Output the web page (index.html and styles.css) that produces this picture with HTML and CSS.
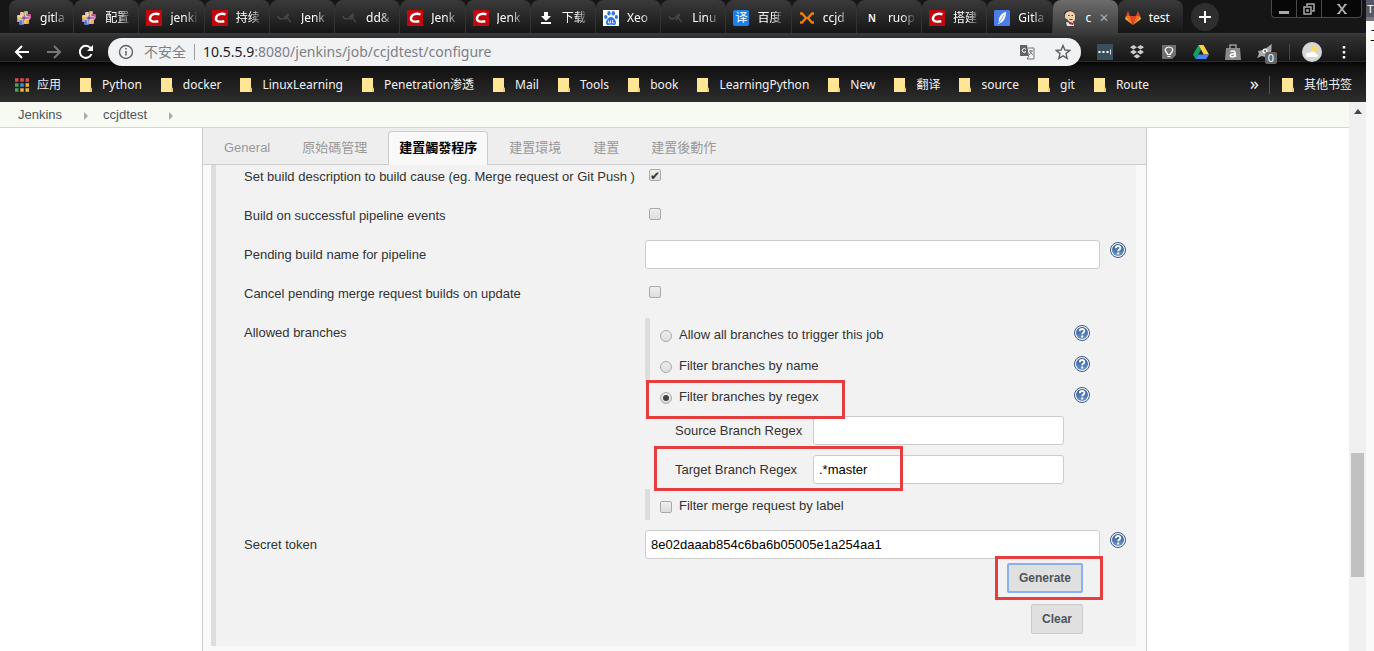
FILE: index.html
```html
<!DOCTYPE html>
<html lang="zh">
<head>
<meta charset="utf-8">
<title>ccjdtest Config [Jenkins]</title>
<link rel="stylesheet" href="styles.css">
</head>
<body>
<svg width="0" height="0" class="defs" aria-hidden="true">
  <defs>
    <linearGradient id="helpfill" x1="0" y1="0" x2="0" y2="1"><stop offset="0" stop-color="#2c5596"/><stop offset="1" stop-color="#6f96ca"/></linearGradient>
    <symbol id="i-hash" viewBox="0 0 16 16">
      <rect x="4" y="2" width="4" height="5" rx="1" fill="#e9b0a0"/><rect x="8" y="1" width="4" height="5" rx="1" fill="#9cc24d"/>
      <rect x="1" y="5" width="5" height="4" rx="1" fill="#f0c35a"/><rect x="10" y="4" width="5" height="5" rx="1" fill="#c9509e"/>
      <rect x="3" y="9" width="5" height="6" rx="1" fill="#5f74c8"/><rect x="8" y="9" width="5" height="5" rx="1" fill="#eab04a"/>
      <rect x="1" y="9" width="3" height="3" fill="#a78ad9"/><path d="M6 2l1 12M10 2l-1 12M2 6l12 1M2 10l12-1" stroke="#f2e4ee" stroke-width=".8"/>
      <rect x="6.500" y="6.500" width="3" height="3" fill="#7a4a8c"/>
    </symbol>
    <symbol id="i-csdn" viewBox="0 0 16 16"><path fill="#c2080f" d="M0 0h16v16H0z"/><path d="M13.500 4.300C10 3.200 4.800 3.600 4 8c-.6 3.800 4 4 8.300 3.300" fill="none" stroke="#fff" stroke-width="2.400"/></symbol>
    <symbol id="i-dim" viewBox="0 0 16 16"><path d="M1 6c1 4 5 4 8 0 2-3 3-2 2 0l-3 4M9 7c3 0 2 4 5 5" fill="none" stroke="#484848" stroke-width="1.300"/></symbol>
    <symbol id="i-down" viewBox="0 0 16 16"><path fill="#fff" d="M6 2h4v4h3l-5 5-5-5h3zM3 12h10v2H3z"/></symbol>
    <symbol id="i-paw" viewBox="0 0 16 16"><path fill="#fff" d="M0 0h16v16H0z"/><g fill="#2f76e8"><ellipse cx="2.800" cy="7" rx="1.700" ry="2.100"/><ellipse cx="6" cy="3.300" rx="1.700" ry="2.300"/><ellipse cx="10.300" cy="3.300" rx="1.700" ry="2.300"/><ellipse cx="13.400" cy="7" rx="1.600" ry="2.100"/><path d="M8 6.800c2 0 5.500 3.900 5 6.400-.6 2.600-3 1.500-5 1.500s-4.400 1.100-5-1.500C2.500 10.700 6 6.800 8 6.800z"/></g><path d="M5.500 10.500v2.500h2v-2.500M9.500 10V13H11.500" stroke="#fff" fill="none" stroke-width=".8"/></symbol>
    <symbol id="i-x" viewBox="0 0 16 16"><path d="M1 3.500h2L7 8l-4 4.500H1M15 3.500h-2L9 8l4 4.500h2" fill="none" stroke="#ec7c0c" stroke-width="2.400"/></symbol>
    <symbol id="i-feather" viewBox="0 0 16 16"><rect width="16" height="16" rx="1.500" fill="#4a7de8"/><path fill="#fff" d="M12 2C7 3 4 8 5 12l-1 2h1l1-1c4-1 6-6 6-11z"/><path d="M5 13l5-8" stroke="#4a7de8" stroke-width=".7"/></symbol>
    <symbol id="i-jenkins" viewBox="0 0 16 16"><path fill="#3a3030" d="M2 4c1-5 11-5 11 1l-1 5H4z"/><path fill="#f0cfaf" d="M3 5c1-5 9-5 10 0v4c-1 4-6 4-7 1L3 8z"/><path d="M6 5.500h1.500M9.500 5.500H11M7.500 9.500h3" stroke="#443" stroke-width="1"/><path fill="#e8e8e8" d="M4 12l4 1 3-1 1 4H5z"/><path fill="#c22" d="M7 12l4 1v2l-4-1z"/></symbol>
    <symbol id="i-gitlab" viewBox="0 0 16 16"><path fill="#e24329" d="M8 15L5 6h6z"/><path fill="#fc6d26" d="M8 15L5 6H1zM8 15l3-9h4z"/><path fill="#fca326" d="M1 6L0 9l8 6zM15 6l1 3-8 6z"/><path fill="#e24329" d="M1 6l2-5 2 5zM15 6l-2-5-2 5z"/></symbol>
    <symbol id="i-folder" viewBox="0 0 12 14"><path fill="#ffe694" d="M0 0h11v9l1 2v3H0z"/><path fill="#efc967" d="M10 9l2 3v2h-2z"/></symbol>
    <symbol id="i-help" viewBox="0 0 16 16"><circle cx="8" cy="8" r="7.500" fill="#fff" stroke="#2f5790"/><circle cx="8" cy="8" r="6" fill="url(#helpfill)"/><path d="M5.800 6.200c0-3 4.600-2.800 4.600-.3 0 1.700-2.200 1.700-2.200 3.400" fill="none" stroke="#fff" stroke-width="1.900"/><rect x="7.200" y="10.500" width="2" height="2" fill="#fff"/></symbol>
  </defs>
</svg>
<div class="browser">
  <header class="chrome">
    <div class="strip">
      <nav class="tabs" aria-label="Browser tabs">
        <button class="tab"><svg><use href="#i-hash"/></svg><span>gitla</span></button>
        <button class="tab"><svg><use href="#i-hash"/></svg><span>配置</span></button>
        <button class="tab"><svg><use href="#i-csdn"/></svg><span>jenki</span></button>
        <button class="tab"><svg><use href="#i-csdn"/></svg><span>持续</span></button>
        <button class="tab"><svg><use href="#i-dim"/></svg><span>Jenk</span></button>
        <button class="tab"><svg><use href="#i-dim"/></svg><span>dd&amp;</span></button>
        <button class="tab"><svg><use href="#i-csdn"/></svg><span>Jenk</span></button>
        <button class="tab"><svg><use href="#i-csdn"/></svg><span>Jenk</span></button>
        <button class="tab"><svg><use href="#i-down"/></svg><span>下载</span></button>
        <button class="tab"><svg><use href="#i-paw"/></svg><span>Xeo</span></button>
        <button class="tab"><svg><use href="#i-dim"/></svg><span>Linu</span></button>
        <button class="tab"><i class="fav fav-yi">译</i><span>百度</span></button>
        <button class="tab"><svg><use href="#i-x"/></svg><span>ccjd</span></button>
        <button class="tab"><i class="fav">N</i><span>ruop</span></button>
        <button class="tab"><svg><use href="#i-csdn"/></svg><span>搭建</span></button>
        <button class="tab"><svg><use href="#i-feather"/></svg><span>Gitla</span></button>
        <button class="tab current"><svg><use href="#i-jenkins"/></svg><span>c</span><b>✕</b></button>
        <button class="tab last"><svg><use href="#i-gitlab"/></svg><span>test</span></button>
      </nav>
      <button class="new-tab" aria-label="New tab"><svg viewBox="0 0 12 12"><path d="M6 0v12M0 6h12" stroke="#fff" stroke-width="2"/></svg></button>
      <div class="controls">
        <button aria-label="Minimize"><svg viewBox="0 0 12 12"><path d="M1 9.500h10" stroke="#aaa" stroke-width="3"/></svg></button>
        <button aria-label="Restore"><svg viewBox="0 0 12 12"><path d="M4 3V1h7v7H9M1 4h7v7H1zM4 7h1v1H4z" fill="none" stroke="#aaa" stroke-width="1.500"/></svg></button>
        <button class="close" aria-label="Close"><svg viewBox="0 0 12 12"><path d="M2.500 1.500l7 9M9.500 1.500l-7 9" stroke="#aaa" stroke-width="2"/><path d="M1 1.500h3M8 1.500h3M1 10.500h3M8 10.500h3" stroke="#aaa"/></svg></button>
      </div>
    </div>
    <div class="toolbar">
      <button class="nav" aria-label="Back"><svg viewBox="0 0 16 16"><path d="M15 8H2M8 2L2 8l6 6" fill="none" stroke="#fff" stroke-width="2"/></svg></button>
      <button class="nav" aria-label="Forward"><svg viewBox="0 0 16 16"><path d="M1 8h13M8 2l6 6-6 6" fill="none" stroke="#777" stroke-width="2"/></svg></button>
      <button class="nav" aria-label="Reload"><svg viewBox="0 0 16 16"><path d="M13.500 10A6 6 0 1 1 12.500 4" fill="none" stroke="#fff" stroke-width="2"/><path fill="#fff" d="M15 1v6H9z"/></svg></button>
      <div class="omnibox">
        <svg viewBox="0 0 16 16"><circle cx="8" cy="8" r="6.500" fill="none" stroke="#5f6368" stroke-width="1.400"/><path d="M8 7v4.500M8 4v1.600" stroke="#5f6368" stroke-width="1.500"/></svg>
        <span class="insecure">不安全</span>
        <span class="url"><b>10.5.5.9</b>:8080/jenkins/job/ccjdtest/configure</span>
        <svg viewBox="0 0 16 16"><path fill="#606468" d="M1 1h7l2 11H1z"/><path d="M9 4h6v11H8l2-3M10 7h4M12 6v1c0 2-1 3-2 4M11 8l3 3" fill="none" stroke="#777"/><path d="M7 5.500a2 2 0 1 0 0 2H5.500" fill="none" stroke="#fff"/></svg>
        <svg viewBox="0 0 16 16"><path d="M8 1.500l1.900 4.500 4.800.4-3.700 3.200 1.200 4.800L8 11.800l-4.200 2.600L5 9.600 1.300 6.400 6.100 6z" fill="none" stroke="#5f6368" stroke-width="1.400"/></svg>
      </div>
      <div class="extensions">
        <button aria-label="LastPass"><svg viewBox="0 0 16 16"><path fill="#39505c" d="M0 0h16v16H0z"/><path d="M1.500 8h2M5.500 8h2M9.500 8h2" stroke="#fff" stroke-width="2"/><path d="M13.500 5.500v5" stroke="#ddd"/></svg></button>
        <button aria-label="Dropbox"><svg viewBox="0 0 16 16"><path fill="#ccc" d="M4.500 1L8 3.300 4.500 5.600 1 3.300zM11.500 1L15 3.300l-3.500 2.300L8 3.300zM4.500 5.800L8 8.100l-3.500 2.300L1 8.100zM11.500 5.800L15 8.100l-3.500 2.300L8 8.100zM8 10l3.500 2.300L8 14.600l-3.500-2.300z"/></svg></button>
        <button aria-label="Notes"><svg viewBox="0 0 16 16"><path fill="#707070" d="M1 1h14v10l-4 4H1z"/><path d="M6.500 9.500c-4-3-2-6.500 1.500-6.500s5.500 3.500 1.500 6.500v1h-3zM6.500 12.500h3" fill="none" stroke="#fff" stroke-width="1.200"/></svg></button>
        <button aria-label="Drive"><svg viewBox="0 0 16 16"><path fill="#12a35f" d="M5.500 1L0 10.500l2.700 4.500L8 5.500z"/><path fill="#ffcf43" d="M5.500 1h5L16 10.500h-5.300z"/><path fill="#4285f4" d="M5.300 10.500H16L13.300 15H2.700z"/></svg></button>
        <button aria-label="Shopping"><svg viewBox="0 0 16 16"><path fill="#8a8a8a" d="M1 4h14l1 12H0z"/><path d="M5 5V1h6v4" fill="none" stroke="#999" stroke-width="1.500"/><path d="M5.500 7.500c5-1.500 5 1 5 5.500M10 9.800c-6-.3-6 3.500-2 3 2 0 2-2 2-3" fill="none" stroke="#fff" stroke-width="1.500"/></svg></button>
        <button class="counted" aria-label="Bird"><svg viewBox="0 0 16 16"><path fill="#aaa" d="M15 0c-1 3 0 5-1 8l-4 1-2 4-3-1-5 2 2-4-1-3 5-1c3-1 5-4 9-6z"/><circle cx="8" cy="7" r="2.500" fill="#fff"/><circle cx="8" cy="7" r="1.200" fill="#777"/></svg><i class="count">0</i></button>
      </div>
      <button class="avatar" aria-label="Profile"><svg viewBox="0 0 20 20"><circle cx="10" cy="10" r="10" fill="#d4d6d8"/><circle cx="12.500" cy="7.500" r="3.500" fill="#f8d869"/><path fill="#fff" d="M4 13c0-3 3-3 4-2 2-3 6-1 6 1 3 0 2 3 1 3H5c-1 0-1-1-1-2z"/></svg></button>
      <button class="menu" aria-label="Menu"><svg viewBox="0 0 4 14"><path d="M2 1v2.500M2 6v2.500M2 11v2.500" stroke="#fff" stroke-width="2.500"/></svg></button>
    </div>
    <nav class="bookmarks" aria-label="Bookmarks">
      <a href="#" class="apps"><svg viewBox="0 0 14 14"><g stroke-width="3.500" stroke-dasharray="3.500 1.750"><path d="M0 2h14" stroke="#e04848"/><path d="M0 7h3.500" stroke="#4ba35a"/><path d="M5.250 7h3.500" stroke="#3b8be0"/><path d="M10.500 7H14" stroke="#e8b33a"/><path d="M0 12h3.500" stroke="#4ba35a"/><path d="M5.250 12H14" stroke="#e8b33a"/></g></svg>应用</a>
      <a href="#"><svg><use href="#i-folder"/></svg>Python</a>
      <a href="#"><svg><use href="#i-folder"/></svg>docker</a>
      <a href="#"><svg><use href="#i-folder"/></svg>LinuxLearning</a>
      <a href="#"><svg><use href="#i-folder"/></svg>Penetration渗透</a>
      <a href="#"><svg><use href="#i-folder"/></svg>Mail</a>
      <a href="#"><svg><use href="#i-folder"/></svg>Tools</a>
      <a href="#"><svg><use href="#i-folder"/></svg>book</a>
      <a href="#"><svg><use href="#i-folder"/></svg>LearningPython</a>
      <a href="#"><svg><use href="#i-folder"/></svg>New</a>
      <a href="#"><svg><use href="#i-folder"/></svg>翻译</a>
      <a href="#"><svg><use href="#i-folder"/></svg>source</a>
      <a href="#"><svg><use href="#i-folder"/></svg>git</a>
      <a href="#"><svg><use href="#i-folder"/></svg>Route</a>
      <button class="more">»</button>
      <a href="#" class="other"><svg><use href="#i-folder"/></svg>其他书签</a>
    </nav>
  </header>
  <div class="viewport">
    <div class="page">
      <nav class="crumbs" aria-label="Breadcrumb"><a href="#">Jenkins</a><i></i><a href="#">ccjdtest</a><i></i></nav>
      <main class="config">
        <nav class="sections">
          <a href="#">General</a><a href="#">原始碼管理</a><a href="#" class="active">建置觸發程序</a><a href="#">建置環境</a><a href="#">建置</a><a href="#">建置後動作</a>
        </nav>
        <div class="scroll">
          <form class="panel">
            <div class="row"><label for="desc">Set build description to build cause (eg. Merge request or Git Push )</label><div><input type="checkbox" id="desc" checked></div></div>
            <div class="row"><label for="pipe">Build on successful pipeline events</label><div><input type="checkbox" id="pipe"></div></div>
            <div class="row"><label for="pending">Pending build name for pipeline</label><input type="text" id="pending"><button type="button" class="help" aria-label="Help"><svg><use href="#i-help"/></svg></button></div>
            <div class="row"><label for="cancel">Cancel pending merge request builds on update</label><div><input type="checkbox" id="cancel"></div></div>
            <div class="row tall"><span class="label">Allowed branches</span>
              <div class="nested">
                <div class="option barred"><input type="radio" name="f" id="all"><label for="all">Allow all branches to trigger this job</label><button type="button" class="help" aria-label="Help"><svg><use href="#i-help"/></svg></button></div>
                <div class="option barred"><input type="radio" name="f" id="name"><label for="name">Filter branches by name</label><button type="button" class="help" aria-label="Help"><svg><use href="#i-help"/></svg></button></div>
                <div class="option"><input type="radio" name="f" id="regex" checked><label for="regex">Filter branches by regex</label><button type="button" class="help" aria-label="Help"><svg><use href="#i-help"/></svg></button><i class="mark mark-option"></i></div>
                <div class="field"><label for="src">Source Branch Regex</label><input type="text" id="src"></div>
                <div class="field"><label for="tgt">Target Branch Regex</label><input type="text" id="tgt" value=".*master"><i class="mark mark-field"></i></div>
                <div class="option barred"><input type="checkbox" id="lab"><label for="lab">Filter merge request by label</label></div>
              </div>
            </div>
            <div class="row tall"><label for="token">Secret token</label>
              <div class="token"><input type="text" id="token" value="8e02daaab854c6ba6b05005e1a254aa1">
                <span class="marked"><button type="button" class="btn focused">Generate</button><i class="mark mark-button"></i></span>
                <button type="button" class="btn">Clear</button>
              </div>
              <button type="button" class="help" aria-label="Help"><svg><use href="#i-help"/></svg></button>
            </div>
          </form>
        </div>
      </main>
    </div>
    <div class="scrollbar"><i class="arrow"></i><i class="thumb"></i></div>
  </div>
</div>
<aside class="behind"><div class="behind-title">T</div><div class="behind-text">工</div></aside>
</body>
</html>
```
FILE: styles.css
```css
* { box-sizing: border-box; }
body {
  margin: 0; height: 100vh; display: flex; overflow: hidden; background: #fafafa;
  font: 13px/20px "Liberation Sans", "Noto Sans CJK TC", sans-serif; color: #333;
}
button { border: 0; background: none; padding: 0; margin: 0; font: inherit; color: inherit; }
a { color: inherit; text-decoration: none; }
i { font-style: normal; }
svg { display: block; flex: none; }
.defs { position: absolute; }
.browser { flex: 1; min-width: 0; display: flex; flex-direction: column; }

/* browser chrome */
.chrome { background: #141414; color: #f1f1f1; font: 12px/20px "Noto Sans", "Noto Sans CJK SC", sans-serif; }
.strip { display: flex; height: 33px; padding: 0 4px 0 9px; background: #161616; }
.tabs { flex: 1; display: grid; grid-auto-flow: column; grid-auto-columns: minmax(0, 1fr); min-width: 0; }
.tab {
  height: 33px; padding: 2px 2px 0 7px; display: flex; align-items: center; gap: 8px;
  border-radius: 8px 8px 0 0; border-right: 1px solid #333; overflow: hidden;
  background: linear-gradient(#3a3a3a, #161616); color: #fff; white-space: nowrap; text-align: left;
}
.tab svg { width: 16px; height: 16px; }
.tab span { flex: 1; min-width: 0; -webkit-mask-image: linear-gradient(90deg, #000 45%, transparent 90%); mask-image: linear-gradient(90deg, #000 45%, transparent 90%); }
.tab b { font-size: 12px; font-weight: 400; color: #aaa; }
.tab.current { background: linear-gradient(#6c6c6c, #3a3a3a); border-right: 0; padding: 2px 9px 0 9px; }
.tab.current span, .tab.last span { -webkit-mask-image: none; mask-image: none; }
.tab.last { border-right: 0; }
.fav { width: 16px; height: 16px; flex: none; font-size: 10px; font-weight: 600; line-height: 16px; text-align: center; }
.fav-yi { background: #1a82ea; border-radius: 2px; font-size: 12px; font-weight: 400; }
.new-tab { width: 28px; height: 28px; margin: 3px 52px 0 8px; border-radius: 14px; background: #2e2e2e; display: grid; place-items: center; }
.new-tab svg { width: 12px; height: 12px; }
.controls { display: flex; width: 91px; height: 18px; border: 1px solid #4a4a4a; border-top: 0; border-radius: 0 0 4px 4px; background: #070707; }
.controls button { width: 25px; display: grid; place-items: center; border-right: 1px solid #4a4a4a; }
.controls .close { flex: 1; border: 0; }
.controls svg { width: 12px; height: 12px; }
.toolbar { display: flex; align-items: center; height: 34px; padding: 4px 20px 0 6px; background: linear-gradient(#3c3c3c 0, #303030 4px, #161616 28px, #2a2a2a 28px, #2a2a2a 29px, #050505 29px, #111); }
.nav { width: 32px; display: grid; place-items: center; }
.nav svg { width: 16px; height: 16px; }
.omnibox { flex: 1; display: flex; align-items: center; height: 28px; margin: 0 8px 0 6px; padding: 0 10px; border-radius: 14px; background: #f1f2f4; color: #7c8086; font-size: 14px; }
.omnibox svg { width: 16px; height: 16px; }
.insecure { margin-left: 10px; padding-right: 8px; border-right: 1px solid #9a9da2; line-height: 16px; }
.url { flex: 1; margin-left: 8px; }
.url b { font-weight: 400; color: #202124; }
.omnibox .url + svg { margin-right: 20px; }
.extensions { display: flex; padding-right: 8px; border-right: 1px solid #444; height: 16px; }
.extensions button { width: 32px; display: grid; place-items: center; }
.extensions svg { width: 16px; height: 16px; }
.counted { position: relative; }
.count { position: absolute; left: 16px; top: 8px; width: 12px; height: 12px; border-radius: 2px; background: #666; color: #fff; font-size: 11px; line-height: 12px; }
.avatar { margin-left: 12px; }
.avatar svg { width: 20px; height: 20px; }
.menu { margin-left: 20px; }
.menu svg { width: 4px; height: 14px; }
.bookmarks { display: flex; align-items: center; height: 35px; gap: 19px; padding: 0 14px 0 15px; background: linear-gradient(#111, #2d2d2d); white-space: nowrap; }
.bookmarks a { display: flex; align-items: center; gap: 10px; }
.bookmarks svg { width: 12px; height: 14px; }
.bookmarks .apps svg { width: 14px; }
.bookmarks .apps { gap: 8px; }
.more { margin-left: auto; margin-right: -9px; font-size: 18px; line-height: 18px; padding-bottom: 4px; }
.bookmarks .other { padding-left: 12px; border-left: 1px solid #555; line-height: 18px; }

/* page */
.viewport { flex: 1; min-height: 0; display: flex; background: #fff; }
.page { flex: 1; min-width: 0; display: flex; flex-direction: column; }
.crumbs { display: flex; align-items: center; height: 26px; padding-left: 18px; background: #f6faf2; border-bottom: 1px solid #d3d7cf; color: #4d545d; }
.crumbs i { margin: 2px 15px 0 22px; border: 4px solid transparent; border-left: 4px solid #aaa; border-right: 0; }
.config { flex: 1; min-height: 0; margin: 0 202px; border: 1px solid #ccc; border-width: 0 1px; background: #f9f9f9; display: flex; flex-direction: column; }
.sections { display: flex; align-items: flex-end; gap: 10px; height: 37px; flex: none; padding-left: 10px; background: #eee; border-bottom: 1px solid #ccc; color: #999; }
.sections a { height: 34px; padding: 0 10px; border: 1px solid transparent; border-bottom: 0; border-radius: 4px 4px 0 0; line-height: 32px; margin-bottom: -1px; }
.sections .active { background: #f9f9f9; border-color: #ccc; color: #000; font-weight: 700; }
.scroll { flex: 1; min-height: 0; overflow: hidden; }
.panel { margin: -8px 10px 0 8px; padding: 0 0 12px 28px; border-left: 5px solid #ddd; background: #f2f2f2; }
.row { display: grid; grid-template-columns: 401px 1fr 36px; align-items: center; min-height: 39px; }
.row.tall { align-items: start; }
.tall > label, .tall > .label { line-height: 39px; }
input { margin: 0; }
input[type="text"] { width: 100%; height: 29px; padding: 0 5px; border: 1px solid #ccc; border-radius: 3px; background: #fff; color: #000; font: inherit; }
input[type="checkbox"], input[type="radio"] { appearance: none; display: grid; place-items: center; flex: none; width: 12px; height: 12px; border: 1px solid #aaa; border-radius: 2px; background: linear-gradient(#eee, #ddd); }
input[type="radio"] { border-radius: 50%; }
input[type="radio"]:checked::before { content: ""; width: 6px; height: 6px; border-radius: 50%; background: #444; }
input[type="checkbox"]:checked::before { content: "✔"; font: 12px/12px "DejaVu Sans", sans-serif; color: #333; }
.row > div > input[type="checkbox"] { margin: 0 0 3px 4px; }
.help { align-self: start; padding: 7px 10px 0; }
.help svg { width: 16px; height: 16px; }
.nested { padding: 5px 0; }
.option { position: relative; display: flex; align-items: center; height: 31px; padding-left: 10px; border-left: 5px solid transparent; }
.barred { border-left-color: #ddd; }
.option input { margin: 5px 7px 0 0; }
.option label { flex: 1; padding-top: 2px; }
.field { position: relative; display: grid; grid-template-columns: 138px 1fr; align-items: center; height: 39px; padding: 0 36px 0 30px; }
.token { display: flex; flex-direction: column; align-items: flex-end; padding-top: 5px; }
.btn { height: 30px; margin: 0 17px 0 0; padding: 0 10px; border: 1px solid #ccc; border-radius: 2px; background: #e0e0e0; color: #4d545d; font-size: 12px; font-weight: 700; }
.marked { position: relative; margin: 4px 0 11px; }
.btn.focused { border: 2px solid #8ab0f0; display: block; }

/* red annotation frames lying over the form */
.mark { position: absolute; border: 3px solid #e53e3e; pointer-events: none; }
.mark-option { left: -4px; top: 0; width: 199px; height: 39px; z-index: 1; }
.mark-field { left: 9px; top: -4px; width: 249px; height: 45px; }
.mark-button { right: -3px; top: -7px; width: 108px; height: 44px; }

.scrollbar { width: 17px; padding: 0 2px; background: #f0f0f0; display: grid; grid-template-rows: 351fr 124fr 74fr; justify-items: center; }
.arrow { margin-top: 7px; width: 8px; height: 5px; border: 4px solid transparent; border-top: 0; border-bottom: 5px solid #444; }
.thumb { width: 13px; background: #c1c1c1; }

/* edge of the window behind */
.behind { width: 8px; flex: none; overflow: hidden; background: #fafafa; color: #000; }
.behind-title { height: 21px; padding: 1px; background: #555868; border-bottom: 4px solid #777; color: #fff; font-size: 11px; line-height: 16px; }
.behind-text { padding: 3px 0 0 4px; font: 14px/20px "Noto Sans CJK SC", sans-serif; }
```
